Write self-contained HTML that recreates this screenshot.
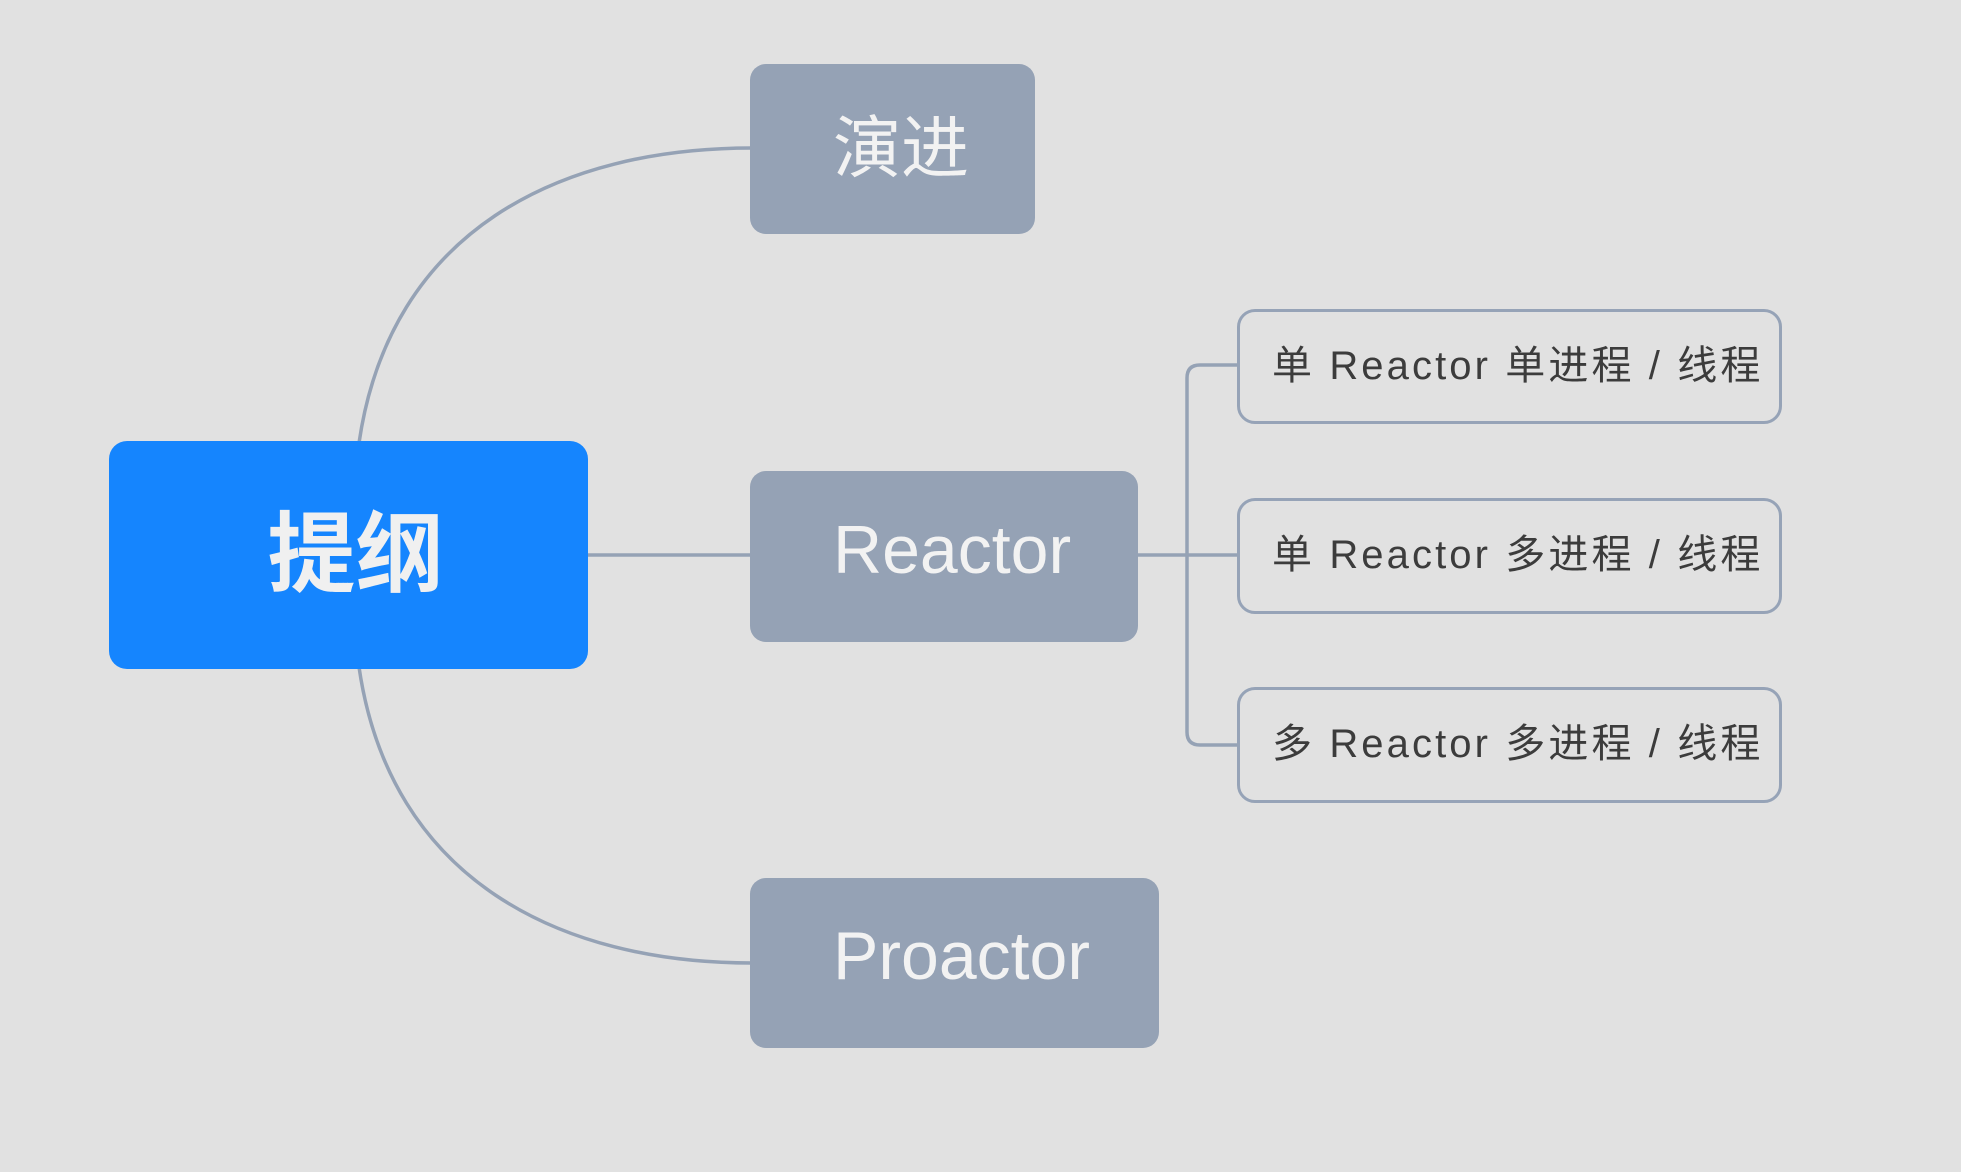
<!DOCTYPE html>
<html><head><meta charset="utf-8"><style>
body{margin:0;width:1961px;height:1172px;background:#e1e1e1;position:relative;overflow:hidden;font-family:"Liberation Sans","Noto Sans CJK SC",sans-serif}
.b{position:absolute;box-sizing:border-box;display:flex;align-items:center}
.g{background:#95a2b5;border-radius:16px;color:#f2f2f2;font-size:68px;padding-left:83px;padding-bottom:14px}
.s{border:3px solid #96a3b7;border-radius:18px;color:#3c3c3c;font-size:40px;padding-left:32px;letter-spacing:3.1px;padding-bottom:10px}
</style></head><body>
<svg width="1961" height="1172" style="position:absolute;left:0;top:0">
<g fill="none" stroke="#95a2b5" stroke-width="3.5">
<path d="M359 443 C 390 230, 560 148, 752 148"/>
<path d="M359 667 C 390 880, 560 963, 752 963"/>
<path d="M588 555 H752"/>
<path d="M1136 555 H1239"/>
<path d="M1239 365 H1200 Q1187 365 1187 378 V732 Q1187 745 1200 745 H1239"/>
</g></svg>
<div class="b" style="left:109px;top:441px;width:479px;height:228px;background:#1585fe;border-radius:18px;justify-content:center;color:#f0f0f0;font-size:88px;font-weight:bold;padding-left:14px;padding-bottom:16px">提纲</div>
<div class="b g" style="left:750px;top:64px;width:285px;height:170px">演进</div>
<div class="b g" style="left:750px;top:471px;width:388px;height:171px">Reactor</div>
<div class="b g" style="left:750px;top:878px;width:409px;height:170px">Proactor</div>
<div class="b s" style="left:1237px;top:309px;width:545px;height:115px">单 Reactor 单进程 / 线程</div>
<div class="b s" style="left:1237px;top:498px;width:545px;height:116px">单 Reactor 多进程 / 线程</div>
<div class="b s" style="left:1237px;top:687px;width:545px;height:116px">多 Reactor 多进程 / 线程</div>
</body></html>
